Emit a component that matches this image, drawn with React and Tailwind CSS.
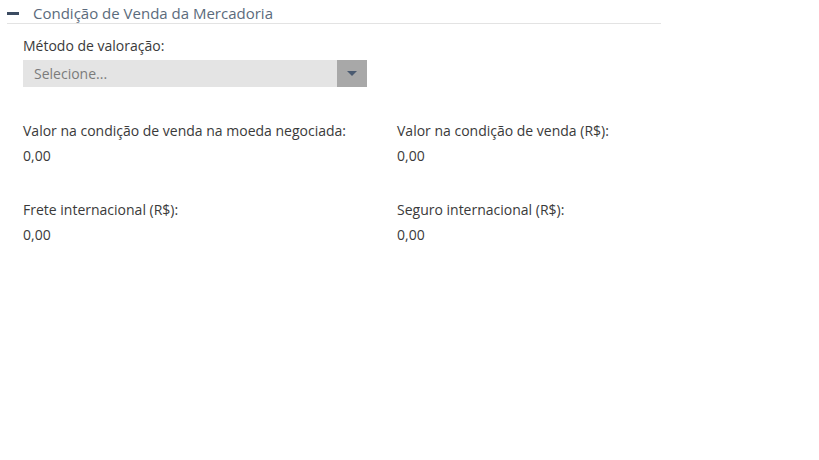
export default function App() {
  const font = { fontFamily: '"Open Sans", "Liberation Sans", sans-serif' };
  const fields = [
    ["Valor na condição de venda na moeda negociada:", "0,00"],
    ["Valor na condição de venda (R$):", "0,00"],
    ["Frete internacional (R$):", "0,00"],
    ["Seguro internacional (R$):", "0,00"],
  ];
  return (
    <div className="w-[819px] h-[460px] bg-white" style={font}>
      <div className="w-[654px] ml-[7px] pt-[4px]">
        <div className="flex items-center h-[20px] border-b border-[#e3e3e3] pb-[1px]">
          <span className="block w-[12px] h-[3px] bg-[#3c4c62]" />
          <span className="ml-[14px] text-[15px] leading-[20px] text-[#5b6b7c]">
            Condição de Venda da Mercadoria
          </span>
        </div>
      </div>
      <div className="pl-[23px] pt-[12px] text-[14px] text-[#3a3a3a]">
        <div className="leading-[20px]">Método de valoração:</div>
        <div className="mt-[4px] flex w-[344px] h-[27px] bg-[#e4e4e4]">
          <div className="flex-1 flex items-center pl-[11px] text-[#7b7b7b] text-[14px]">Selecione...</div>
          <div className="w-[30px] bg-[#a8a8a8] flex items-center justify-center">
            <svg width="10" height="6" viewBox="0 0 10 6">
              <path d="M0 0 L10 0 L5 5 Z" fill="#4a5a70" />
            </svg>
          </div>
        </div>
        <div className="mt-[34px] grid grid-cols-[374px_1fr] gap-y-[34px]">
          {fields.map(([label, value]) => (
            <div key={label}>
              <div className="leading-[20px]">{label}</div>
              <div className="leading-[20px] mt-[5px]">{value}</div>
            </div>
          ))}
        </div>
      </div>
    </div>
  );
}
